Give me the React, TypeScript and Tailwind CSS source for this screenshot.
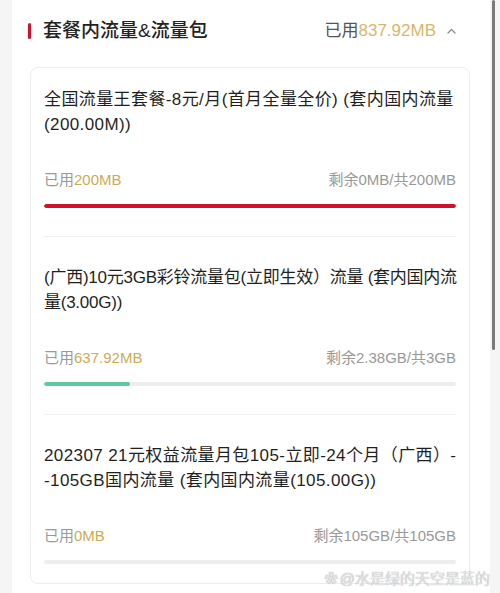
import React from 'react';

interface FlowPackage {
  id: number;
  name: string[];
  tracking: string;
  used: string;
  remain: string;
  total: string;
  percent: number;
  color: string;
}

// title lines are kept as they wrap in the app
const packages: FlowPackage[] = [
  {
    id: 1,
    name: ['全国流量王套餐-8元/月(首月全量全价) (套内国内流量', '(200.00M))'],
    tracking: 'tracking-[0.4px]',
    used: '200MB',
    remain: '0MB',
    total: '200MB',
    percent: 100,
    color: '#d0112b',
  },
  {
    id: 2,
    name: ['(广西)10元3GB彩铃流量包(立即生效）流量 (套内国内流', '量(3.00G))'],
    tracking: 'tracking-[-0.25px]',
    used: '637.92MB',
    remain: '2.38GB',
    total: '3GB',
    percent: 20.8,
    color: '#5ccb9f',
  },
  {
    id: 3,
    name: ['202307 21元权益流量月包105-立即-24个月（广西）-', '-105GB国内流量 (套内国内流量(105.00G))'],
    tracking: 'tracking-[0.4px]',
    used: '0MB',
    remain: '105GB',
    total: '105GB',
    percent: 0,
    color: '#5ccb9f',
  },
];

const font = { fontFamily: '"Liberation Sans", "Noto Sans CJK SC", sans-serif' };

export default function App() {
  return (
    <div className="relative min-h-[593px] bg-[#f5f5f5] pl-3 pr-[10px]" style={font}>
      <div className="min-h-[593px] bg-white pt-[19px] pb-4">
        {/* header */}
        <div className="flex h-6 items-center justify-between pl-4 pr-[34px]">
          <div className="flex items-center">
            <span className="h-4 w-[3px] rounded-full bg-[#d0112b]" />
            <h2 className="ml-3 text-[19px] font-medium leading-6 text-[#222]">套餐内流量&amp;流量包</h2>
          </div>
          <div className="flex items-center">
            <span className="text-[17px] text-[#555]">
              已用<span className="text-[#d8b66c]">837.92MB</span>
            </span>
            <svg className="ml-[11px] h-[6px] w-[9px]" viewBox="0 0 9 6" fill="none">
              <path d="M1 5L4.5 1.5L8 5" stroke="#888" strokeWidth="1.2" strokeLinecap="round" strokeLinejoin="round" />
            </svg>
          </div>
        </div>

        {/* card */}
        <div className="mt-6 ml-[18px] mr-5 rounded-lg border border-[#ededed] px-[13px] pt-5 pb-[19px]">
          {packages.map((p, i) => (
            <div
              key={p.id}
              className={`${i > 0 ? 'pt-[29px]' : ''} ${i < packages.length - 1 ? 'border-b border-[#f0f0f0] pb-[28px]' : ''}`}
            >
              <p className={`text-[17px] leading-[24.5px] whitespace-nowrap text-[#1f1f1f] ${p.tracking}`}>
                {p.name.map((line, j) => (
                  <span key={j} className="block">
                    {line}
                  </span>
                ))}
              </p>
              <div className="mt-[33px] flex h-5 items-center justify-between text-[15px] leading-5">
                <span className="text-[#999]">
                  已用<span className="text-[#cfaa55]">{p.used}</span>
                </span>
                <span className="text-[#999]">
                  剩余{p.remain}/共{p.total}
                </span>
              </div>
              <div className="mt-[14px] h-1 w-full overflow-hidden rounded-full bg-[#eeeeee]">
                <div className="h-full rounded-full" style={{ width: `${p.percent}%`, backgroundColor: p.color }} />
              </div>
            </div>
          ))}
        </div>
      </div>

      {/* scrollbar */}
      <div className="absolute top-0 right-[5px] h-[350px] w-[3px] rounded-full bg-[#7a7a7a]" />

      {/* watermark */}
      <div className="absolute right-[10px] bottom-[10px] flex items-center gap-[2px] text-[15px] text-[#e4e4e4] [text-shadow:0_0_1px_#9a9a9a]">
        <span className="text-[13px]">✿</span>
        <span>@水是绿的天空是蓝的</span>
      </div>
    </div>
  );
}
